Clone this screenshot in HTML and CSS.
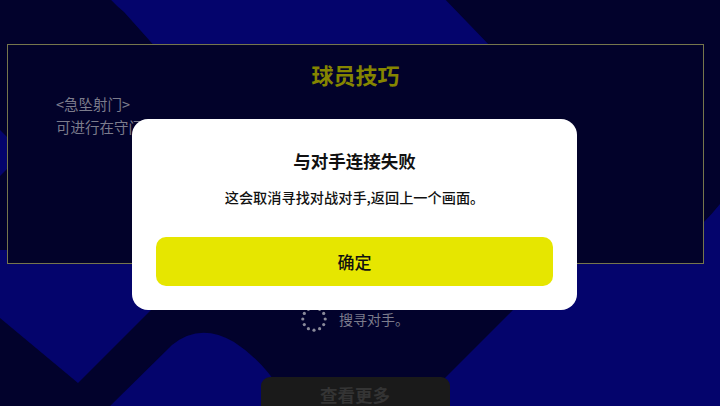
FILE: index.html
```html
<!DOCTYPE html>
<html lang="zh-CN">
<head>
<meta charset="utf-8">
<title>球员技巧</title>
<link rel="stylesheet" href="styles.css">
</head>
<body>
  <!-- decorative backdrop shapes -->
  <svg class="backdrop" width="720" height="406" viewBox="0 0 720 406" aria-hidden="true">
    <path class="shape" d="M106,-6 Q114,4 124,12 L158,50 L494,50 L440,-6 Z"/>
    <path class="shape" d="M0,130 L8,138 L8,168 L0,176 Z"/>
    <path class="shape" d="M0,250 L230,250 L230,231 L78,383 L0,318 Z"/>
    <path class="shape" d="M104,412 L172,345 Q200,322 234,342 Q262,360 282,392 L294,412 Z"/>
    <path class="shape" d="M720,204 Q712,214 702,224 L601,222 L513,310 L411,412 L720,412 Z"/>
  </svg>

  <main class="page">
    <section class="tips">
      <h2 class="tips-title">球员技巧</h2>
      <p class="tips-line">&lt;急坠射门&gt;</p>
      <p class="tips-line">可进行在守门员面前将球轻挑过顶的挑射。</p>
    </section>

    <div class="search">
      <svg class="spinner" width="26" height="26" viewBox="0 0 26 26" aria-hidden="true">
        <circle cx="13" cy="1.8" r="1.6"/>
        <circle cx="18.6" cy="3.3" r="1.6"/>
        <circle cx="22.7" cy="7.4" r="1.6"/>
        <circle cx="24.2" cy="13" r="1.6"/>
        <circle cx="22.7" cy="18.6" r="1.6"/>
        <circle cx="18.6" cy="22.7" r="1.6"/>
        <circle cx="13" cy="24.2" r="1.6"/>
        <circle cx="7.4" cy="22.7" r="1.6"/>
        <circle cx="3.3" cy="18.6" r="1.6"/>
        <circle cx="1.8" cy="13" r="1.6"/>
        <circle cx="3.3" cy="7.4" r="1.6"/>
        <circle cx="7.4" cy="3.3" r="1.6"/>
      </svg>
      <span class="search-text">搜寻对手。</span>
    </div>

    <button class="more" type="button">查看更多</button>
  </main>

  <div class="overlay">
    <div class="dialog" role="dialog">
      <h3 class="dialog-title">与对手连接失败</h3>
      <p class="dialog-text">这会取消寻找对战对手,返回上一个画面。</p>
      <button class="dialog-btn" type="button">确定</button>
    </div>
  </div>
</body>
</html>
```

FILE: styles.css
```css
html, body {
  margin: 0;
  padding: 0;
}

body {
  width: 720px;
  height: 406px;
  overflow: hidden;
  position: relative;
  background: #02022c;
  font-family: "Noto Sans CJK SC", "Noto Sans", sans-serif;
}

.backdrop {
  position: absolute;
  left: 0;
  top: 0;
  z-index: 0;
}

.backdrop .shape {
  fill: #04046c;
}

.page {
  position: relative;
  z-index: 1;
  width: 710px;
  display: flex;
  flex-direction: column;
  align-items: center;
  padding-top: 44px;
}

/* tips panel */
.tips {
  box-sizing: border-box;
  width: 697px;
  height: 220px;
  margin: 0 6px 0 7px;
  align-self: flex-start;
  border: 1px solid #76764c;
  background: #02022a;
  padding: 14px 48px 0;
}

.tips-title {
  margin: 0 0 3px;
  text-align: center;
  font-size: 22px;
  line-height: 30px;
  font-weight: 700;
  color: #858500;
}

.tips-line {
  margin: 0;
  font-size: 14.5px;
  line-height: 23px;
  color: #7c7c8c;
}

/* searching indicator */
.search {
  display: flex;
  align-items: center;
  gap: 12px;
  margin-top: 41px;
  height: 28px;
}

.spinner circle {
  fill: #8a8a9a;
}

.search-text {
  font-size: 14px;
  line-height: 20px;
  color: #7c7c8c;
}

.more {
  margin-top: 44px;
  width: 189px;
  height: 46px;
  border: none;
  border-radius: 9px;
  background: #1a1a1a;
  color: #343434;
  font-family: inherit;
  font-size: 17.5px;
  font-weight: 700;
  line-height: 36px;
  padding: 0 0 10px;
}

/* modal */
.overlay {
  position: absolute;
  left: 0;
  top: 0;
  z-index: 2;
  width: 709px;
  height: 406px;
  display: flex;
  justify-content: center;
  align-items: flex-start;
  padding-top: 119px;
  box-sizing: border-box;
}

.dialog {
  box-sizing: border-box;
  width: 445px;
  height: 191px;
  background: #ffffff;
  border-radius: 16px;
  padding: 29px 24px 24px;
  display: flex;
  flex-direction: column;
  align-items: center;
}

.dialog-title {
  margin: 0;
  font-size: 17.5px;
  line-height: 26px;
  font-weight: 700;
  color: #111111;
}

.dialog-text {
  margin: 13px 0 0;
  font-size: 14.2px;
  line-height: 20px;
  font-weight: 500;
  color: #111111;
}

.dialog-btn {
  margin-top: auto;
  width: 100%;
  height: 49px;
  border: none;
  border-radius: 10px;
  background: #e6e600;
  color: #111111;
  font-family: inherit;
  font-size: 17px;
  font-weight: 500;
}
```
